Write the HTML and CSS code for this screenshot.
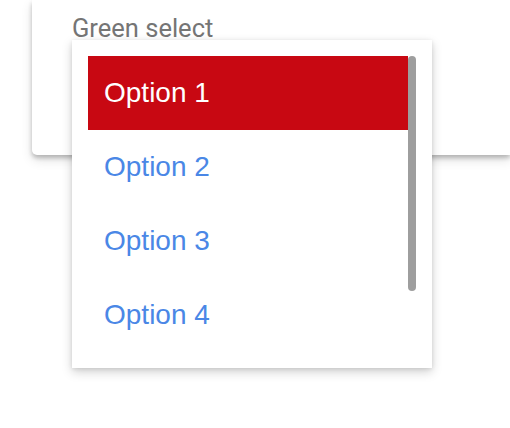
FILE: index.html
```html
<!DOCTYPE html>
<html>
<head>
<meta charset="utf-8">
<link rel="stylesheet" href="styles.css">
</head>
<body>
<div class="card">
  <div class="field">
    <div class="label">Green select</div>
    <div class="menu">
      <ul class="list">
        <li class="item selected">Option 1</li>
        <li class="item">Option 2</li>
        <li class="item">Option 3</li>
        <li class="item">Option 4</li>
      </ul>
      <div class="thumb"></div>
    </div>
  </div>
</div>
</body>
</html>
```
FILE: styles.css
```css
html, body {
  margin: 0;
  padding: 0;
  background: #fff;
  overflow: hidden;
  width: 510px;
  height: 428px;
}
.card {
  margin-left: 32px;
  width: 478px;
  height: 155px;
  background: #fff;
  border-radius: 0 0 0 5px;
  box-shadow: 0 3px 4px rgba(0,0,0,0.22), 0 5px 12px rgba(0,0,0,0.12);
  box-sizing: border-box;
  padding-left: 40px;
  padding-top: 14px;
}
.field {
  position: relative;
}
.label {
  font-family: Roboto, sans-serif;
  font-size: 25.5px;
  line-height: 28px;
  color: #757575;
}
.menu {
  position: absolute;
  left: 0;
  top: 26px;
  width: 360px;
  box-sizing: border-box;
  padding: 16px;
  background: #fff;
  box-shadow: 0 4px 10px rgba(0,0,0,0.18), 0 1px 4px rgba(0,0,0,0.10);
}
.list {
  list-style: none;
  margin: 0;
  padding: 0 8px 0 0;
  height: 296px;
}
.thumb {
  position: absolute;
  left: 336px;
  top: 16px;
  width: 8px;
  height: 235px;
  border-radius: 4px;
  background: #9e9e9e;
}
.item {
  height: 74px;
  display: flex;
  align-items: center;
  padding-left: 16px;
  font-family: "Liberation Sans", Arial, sans-serif;
  font-size: 28px;
  color: #4a87e6;
}
.item.selected {
  background: #c80812;
  color: #fff;
}
```
